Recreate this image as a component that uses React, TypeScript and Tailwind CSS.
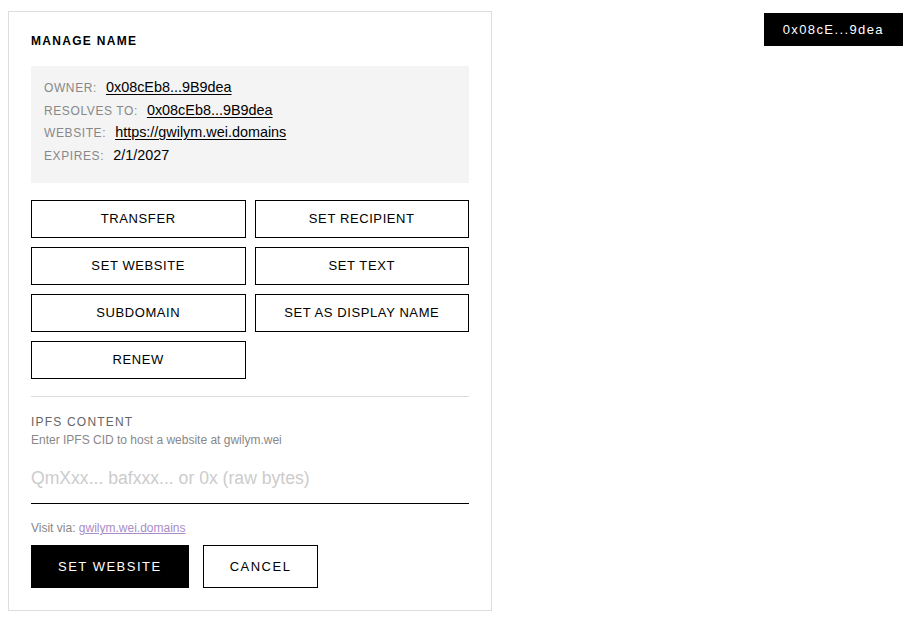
import React from "react";

const font = { fontFamily: '"Liberation Sans", Arial, sans-serif' };

const details: { label: string; value: string; link: boolean }[] = [
	{ label: "OWNER:", value: "0x08cEb8...9B9dea", link: true },
	{ label: "RESOLVES TO:", value: "0x08cEb8...9B9dea", link: true },
	{ label: "WEBSITE:", value: "https://gwilym.wei.domains", link: true },
	{ label: "EXPIRES:", value: "2/1/2027", link: false },
];

const actions = [
	"TRANSFER",
	"SET RECIPIENT",
	"SET WEBSITE",
	"SET TEXT",
	"SUBDOMAIN",
	"SET AS DISPLAY NAME",
	"RENEW",
];

export default function App() {
	return (
		<div
			className="min-h-[620px] bg-white flex justify-between items-start pl-2 pr-[7px] pt-[11px]"
			style={font}
		>
			<div className="w-[484px] border border-[#dddddd] p-[22px]">
				<h2 className="text-[12px] leading-[14px] font-bold tracking-[1.3px] text-black">
					MANAGE NAME
				</h2>

				<div className="mt-[18px] bg-[#f4f4f4] px-[13px] pt-[10px] pb-[17px]">
					{details.map((d) => (
						<div key={d.label} className="h-[22.5px] pt-[3px] flex items-baseline">
							<span className="text-[12px] leading-[14px] tracking-[0.6px] text-[#888888]">
								{d.label}
							</span>
							<span
								className={`ml-[9px] text-[14.4px] leading-[16px] text-black ${d.link ? "underline underline-offset-2" : ""}`}
							>
								{d.value}
							</span>
						</div>
					))}
				</div>

				<div className="mt-[17px] grid grid-cols-2 gap-[9px]">
					{actions.map((a) => (
						<button
							key={a}
							className="h-[38px] border border-black bg-white text-[13px] tracking-[0.6px] text-black"
						>
							{a}
						</button>
					))}
				</div>

				<div className="mt-[17px] border-t border-[#dddddd]" />

				<div className="mt-[18px] text-[12px] leading-[14px] tracking-[1.2px] text-[#666666]">
					IPFS CONTENT
				</div>
				<div className="mt-[4px] text-[12px] leading-[14px] text-[#888888]">
					Enter IPFS CID to host a website at gwilym.wei
				</div>

				<input
					className="mt-[13px] block w-full h-[44px] pb-[6px] border-b border-black text-[17.6px] text-black placeholder:text-[#cccccc] outline-none bg-transparent"
					style={font}
					placeholder="QmXxx... bafxxx... or 0x (raw bytes)"
				/>

				<div className="mt-[17px] text-[12px] leading-[14px] text-[#888888]">
					Visit via:{" "}
					<span className="text-[#a98cc5] underline">gwilym.wei.domains</span>
				</div>

				<div className="mt-[10px] flex gap-[14px]">
					<button className="h-[43px] px-[26px] border border-black bg-black text-white text-[13px] tracking-[1.5px]">
						SET WEBSITE
					</button>
					<button className="h-[43px] px-[26px] border border-black bg-white text-black text-[13px] tracking-[1.5px]">
						CANCEL
					</button>
				</div>
			</div>

			<div className="mt-[2px] bg-black text-white text-[13px] leading-[33px] tracking-[1.4px] px-[19px]">
				0x08cE...9dea
			</div>
		</div>
	);
}
